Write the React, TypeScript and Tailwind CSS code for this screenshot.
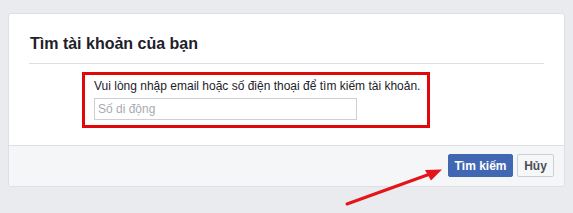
import React from "react";

export default function App() {
  return (
    <div
      className="relative w-[573px] h-[213px] overflow-hidden bg-[#e9ebee] pt-[13px] pl-[8px]"
      style={{ fontFamily: '"Liberation Sans", Arial, sans-serif' }}
    >
      <div className="w-[557px] bg-white border border-[#dddfe2] rounded-[3px] overflow-hidden">
        <div className="mx-[20px] pt-[20px] pb-[9px] border-b border-[#dddfe2]">
          <h2 className="text-[16px] leading-[20px] font-bold text-[#1d2129] pl-[1px]">
            Tìm tài khoản của bạn
          </h2>
        </div>
        <div className="pt-[8px] pb-[17px] pl-[73px]">
          <div className="w-[348px] h-[56px] border-[3px] border-[#e0080b] pt-[3px] pl-[9px]">
            <div className="text-[12px] leading-[16px] text-[#1d2129] whitespace-nowrap">
              Vui lòng nhập email hoặc số điện thoại để tìm kiếm tài khoản.
            </div>
            <input
              className="mt-[4px] block w-[263px] h-[22px] border border-[#ccd0d5] px-[3px] text-[12px] text-[#1d2129] placeholder:text-[#a8abb1] outline-none"
              placeholder="Số di động"
            />
          </div>
        </div>
        <div className="flex justify-end gap-[4px] bg-[#f5f6f7] border-t border-[#dddfe2] pt-[8px] pb-[9px] pr-[10px]">
          <button className="h-[23px] w-[65px] rounded-[2px] border border-[#4267b2] bg-[#4267b2] text-white text-[12px] font-bold">
            Tìm kiếm
          </button>
          <button className="h-[23px] w-[37px] rounded-[2px] border border-[#ccd0d5] bg-[#f6f7f9] text-[#4b4f56] text-[12px] font-bold">
            Hủy
          </button>
        </div>
      </div>
      <svg
        className="absolute left-0 top-0 pointer-events-none"
        width="573"
        height="213"
        viewBox="0 0 573 213"
      >
        <line x1="347" y1="204" x2="430" y2="174" stroke="#e5141a" strokeWidth="3" strokeLinecap="round" />
        <polygon points="442,169.5 425,170 431,180.5" fill="#e5141a" />
      </svg>
    </div>
  );
}
